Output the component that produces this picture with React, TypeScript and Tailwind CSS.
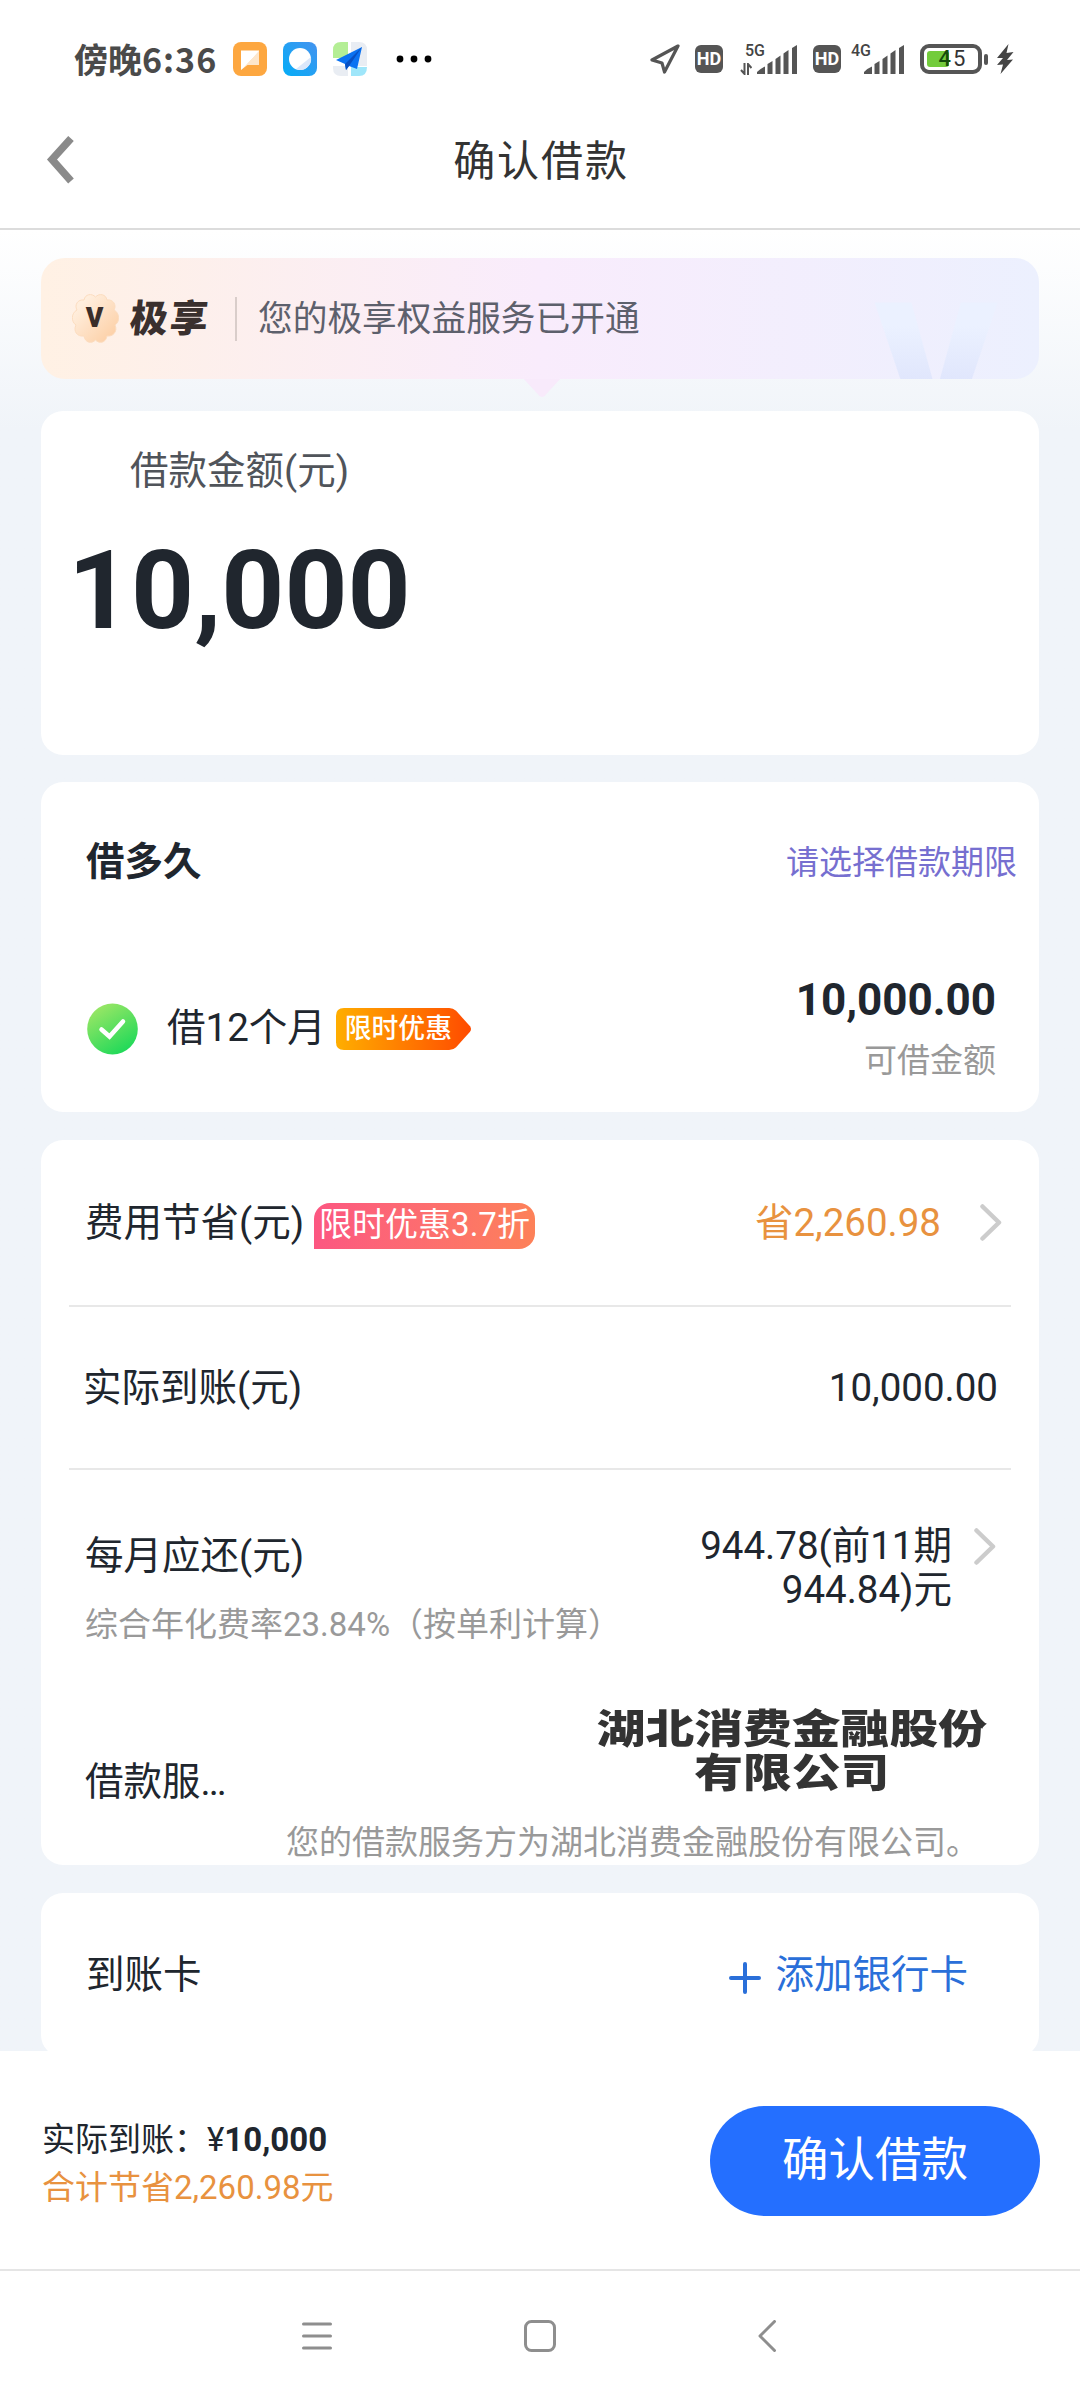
import type { ReactNode } from "react";

const SIGNAL_BARS = [
  "M0 29 L0 27 Q4 23 8 21.5 V29 Z",
  "M10.500 19 L15.500 16 V29 H10.500 Z",
  "M18.500 14 L23.500 10.500 V29 H18.500 Z",
  "M26.500 8.500 L31.500 5 V29 H26.500 Z",
  "M35 3 L40 0 V29 H35 Z",
];

function SignalBars() {
  return (
    <svg width="40" height="29" viewBox="0 0 40 29" fill="#555">
      {SIGNAL_BARS.map((d) => (
        <path key={d} d={d} />
      ))}
    </svg>
  );
}

function HdBadge() {
  return (
    <div className="flex h-7 w-7 items-center justify-center rounded-[6px] bg-[#555] font-[Roboto,sans-serif] text-[18px] font-bold leading-none text-white">
      HD
    </div>
  );
}

function AppIcons() {
  return (
    <div className="ml-4 flex items-center gap-4">
      <svg width="34" height="34" viewBox="0 0 34 34">
        <defs>
          <linearGradient id="msg" x1="0" y1="0" x2="1" y2="1">
            <stop offset="0.500" stopColor="#fff" />
            <stop offset="0.520" stopColor="#fde6cb" />
          </linearGradient>
        </defs>
        <rect width="34" height="34" rx="8" fill="#fda740" />
        <path d="M8 8.500 H26 V23 H14.500 L8 28 Z" fill="url(#msg)" />
      </svg>
      <svg width="34" height="34" viewBox="0 0 34 34">
        <defs>
          <linearGradient id="browser" x1="1" y1="0" x2="0" y2="1">
            <stop offset="0" stopColor="#4593ef" />
            <stop offset="1" stopColor="#04adf7" />
          </linearGradient>
        </defs>
        <rect width="34" height="34" rx="8" fill="url(#browser)" />
        <circle cx="17" cy="17" r="11" fill="#fff" />
        <path d="M28 15 A11 11 0 0 1 13 27 Z" fill="#dbe7fa" />
      </svg>
      <svg width="34" height="34" viewBox="0 0 34 34">
        <path d="M8 0 H15 V16 H0 V8 Q0 0 8 0 Z" fill="#b4ee95" />
        <path d="M18 0 H26 Q34 0 34 8 V24 H18 Z" fill="#e9edf3" />
        <path d="M0 24 H15 V34 H8 Q0 34 0 26 Z" fill="#e9edf3" />
        <path d="M18 25 H34 Q34 34 26 34 H18 Z" fill="#9fe6fa" />
        <path d="M29 5 L3 18 L12 22 L13 28 L16 24 L24 27 Z" fill="#0a72f2" />
        <path d="M29 5 L12 22 L13 28 L16 24 Z" fill="#0750c4" />
      </svg>
    </div>
  );
}

function StatusBar() {
  return (
    <div className="flex h-[118px] items-center pl-[74px] pr-[66px]">
      <span className="w-[143px] whitespace-nowrap text-[34px] font-bold leading-none text-[#4a4a4a] font-['Noto_Sans_CJK_SC',sans-serif]">
        傍晚<span className="tracking-[1px]">6:36</span>
      </span>
      <AppIcons />
      <svg className="ml-[29px]" width="36" height="8" viewBox="0 0 36 8">
        <circle cx="4" cy="4" r="3.400" />
        <circle cx="18" cy="4" r="3.400" />
        <circle cx="32" cy="4" r="3.400" />
      </svg>

      <div className="ml-auto flex items-center">
        <svg width="30" height="30" viewBox="0 0 30 30" fill="none" stroke="#555" strokeWidth="3.200" strokeLinejoin="round">
          <path d="M28 2 L2 16 L12 19 L14.500 28 Z" />
        </svg>
        <div className="ml-[15px]">
          <HdBadge />
        </div>
        <div className="relative ml-[34px] flex">
          <SignalBars />
          <span className="absolute -left-3 -top-[2px] text-[16px] font-medium leading-none text-[#444] font-[Roboto,sans-serif]">
            5G
          </span>
          <svg className="absolute -left-[17px] top-[18px]" width="12" height="12" viewBox="0 0 12 12" stroke="#555" strokeWidth="2" fill="none">
            <path d="M1 7 L4.500 11 V0 M8 12 V1 L11.500 5" />
          </svg>
        </div>
        <div className="ml-4">
          <HdBadge />
        </div>
        <div className="relative ml-[23px] flex">
          <SignalBars />
          <span className="absolute -left-[13px] -top-[2px] text-[16px] font-medium leading-none text-[#444] font-[Roboto,sans-serif]">
            4G
          </span>
        </div>
        <div className="relative ml-4 flex h-[30px] w-[62px] items-center justify-center rounded-[9px] border-4 border-[#555]">
          <div className="absolute left-[3px] top-[3px] h-4 w-[22px] rounded-[3px] bg-[#73cc3c]" />
          <span className="relative pl-1 text-[22px] leading-none tracking-[2px] text-[#333] font-[Roboto,sans-serif]">
            <span className="font-medium text-[#144d0c]">4</span>5
          </span>
        </div>
        <div className="ml-[2px] h-[11px] w-1 rounded-sm bg-[#555]" />
        <svg className="ml-2" width="18" height="30" viewBox="0 0 18 30" fill="#444">
          <path d="M12.500 0 L1 14 H7 L1 21 L7 20.500 L4.500 30 L17 15.500 L11 16 L17.500 8 L10.500 9 Z" />
        </svg>
      </div>
    </div>
  );
}

function TitleBar() {
  return (
    <div className="flex h-[112px] items-center border-b-2 border-[#dcdcdc] pb-[22px]">
      <svg className="mb-[5px] ml-[46px]" width="28" height="48" viewBox="0 0 28 48" fill="none" stroke="#8a8a8a" strokeWidth="7.500">
        <path d="M25 2.500 L6 23.500 L25 45" />
      </svg>
      <h1 className="flex-1 pr-[72px] text-center text-[42px] leading-[50px] tracking-[1.900px] text-[#333]">确认借款</h1>
    </div>
  );
}

function ServiceBanner() {
  return (
    <div className="relative h-[121px] shrink-0">
      <svg className="absolute left-[482px] top-[120px]" width="38" height="20" viewBox="0 0 38 20">
        <path d="M0 0 H38 L21.500 18 Q19 20 16.500 18 Z" fill="#f8eafb" />
      </svg>
      <div className="relative flex h-full items-center overflow-hidden rounded-[24px] bg-linear-to-r from-[#fff1e4] via-[#f9ecfc] to-[#ecf0fe]">
        <span className="absolute left-[832px] top-[-28px] bg-linear-to-b from-[#ebf1ff] from-40% to-[#dfe5fc] to-65% bg-clip-text text-[250px] font-bold leading-[240px] text-transparent">
          v
        </span>
        <svg className="ml-[31px]" width="47" height="49" viewBox="0 0 47 49">
          <defs>
            <linearGradient id="flower" x1="0" y1="0" x2="1" y2="1">
              <stop offset="0.200" stopColor="#ffeedd" />
              <stop offset="1" stopColor="#fccb9e" />
            </linearGradient>
          </defs>
          <path
            d="M23.500 3 C27 -1 34 0 35 6 C41 5 45 11 42 16 C48 19 48 28 43 31 C46 37 41 43 35 42 C34 49 27 50 23.500 46 C20 50 13 49 12 42 C5 43 1 37 4 31 C-1 28 -1 19 5 16 C2 11 6 5 12 6 C13 0 20 -1 23.500 3 Z"
            fill="url(#flower)"
            stroke="#fbdcbf"
            strokeWidth="1"
          />
          <text x="22.500" y="33" textAnchor="middle" fontFamily="Roboto, sans-serif" fontSize="36" fontWeight="700" fill="#3a2e2a">
            v
          </text>
        </svg>
        <span className="ml-[11px] -skew-x-6 text-[38px] font-black leading-[50px] tracking-[2px] text-[#3a302e]">极享</span>
        <div className="ml-[25px] h-11 w-[2px] bg-[#d9cdca]" />
        <p className="ml-[21px] text-[34.700px] leading-[50px] text-[#5d606c]">您的极享权益服务已开通</p>
      </div>
    </div>
  );
}

function Chevron() {
  return (
    <svg width="22" height="37" viewBox="0 0 22 37" fill="none" stroke="#ccc" strokeWidth="4.500" strokeLinecap="round" strokeLinejoin="round">
      <path d="M2.500 2.500 L19 18.500 L2.500 34.500" />
    </svg>
  );
}

function Card({ className, children }: { className: string; children: ReactNode }) {
  return <section className={`shrink-0 rounded-[22px] bg-white ${className}`}>{children}</section>;
}

function TermCard() {
  return (
    <Card className="mt-[27px] h-[330px]">
      <div className="flex h-[156px] items-center justify-between pl-[45px] pr-[22px]">
        <h2 className="pt-[3px] text-[38.500px] font-bold text-[#20262e]">借多久</h2>
        <span className="pt-[5px] text-[33px] text-[#766fd0]">请选择借款期限</span>
      </div>
      <div className="flex items-start pl-[45px] pr-[43px]">
        <div className="flex h-[182px] items-center">
          <svg width="52" height="52" viewBox="0 0 52 52">
            <defs>
              <linearGradient id="check" x1="0.200" y1="0" x2="0.800" y2="1">
                <stop offset="0" stopColor="#a0e766" />
                <stop offset="1" stopColor="#17d858" />
              </linearGradient>
            </defs>
            <ellipse cx="26.500" cy="26" rx="25.300" ry="25.500" fill="url(#check)" />
            <path d="M15.500 26.500 L23.500 33.500 L37 18.500" fill="none" stroke="#fff" strokeWidth="4.500" strokeLinecap="round" />
          </svg>
          <span className="ml-[29px] pb-[3px] text-[38.500px] text-[#20262e]">借12个月</span>
          <div className="relative ml-2.5 h-[43px] w-[136px]">
            <svg className="absolute inset-0" width="136" height="42" viewBox="0 0 137 44" preserveAspectRatio="none">
              <defs>
                <linearGradient id="promo" x1="0" y1="0" x2="1" y2="0">
                  <stop offset="0" stopColor="#ffae00" />
                  <stop offset="1" stopColor="#ff4b00" />
                </linearGradient>
              </defs>
              <path d="M8 0 H114 Q118 0 121 3 L135 19 Q137 22 135 25 L121 41 Q118 44 114 44 H8 Q0 44 0 36 V8 Q0 0 8 0 Z" fill="url(#promo)" />
            </svg>
            <span className="relative block pl-[9px] text-[26.800px] font-medium leading-[43px] text-white">限时优惠</span>
          </div>
        </div>
        <div className="ml-auto flex flex-col items-end pt-[37px]">
          <span className="text-[44px] font-bold leading-[50px] text-[#20262e]">10,000.00</span>
          <span className="mt-[11px] text-[33px] leading-[50px] text-[#999]">可借金额</span>
        </div>
      </div>
    </Card>
  );
}

function FeeCard() {
  return (
    <Card className="mt-7 flex h-[725px] flex-col px-7 text-[38.500px] text-[#20262e]">
      <div className="flex h-[167px] shrink-0 items-center border-b-2 border-[#e8e8e8] pl-4 pr-[9px]">
        <span>费用节省(元)</span>
        <span className="ml-2.5 mt-1.5 h-[46px] rounded-[16px] rounded-bl-none bg-linear-to-r from-[#fc5681] to-[#fd8158] px-[5px] text-[33px] leading-[44px] text-white">
          限时优惠3.7折
        </span>
        <span className="ml-auto mr-[39px] text-[#e8923f]">省2,260.98</span>
        <Chevron />
      </div>
      <div className="flex h-[163px] shrink-0 items-center justify-between border-b-2 border-[#e8e8e8] pl-[14px] pr-[13px]">
        <span>实际到账(元)</span>
        <span>10,000.00</span>
      </div>
      <div className="flex justify-between pl-4 pr-[15px]">
        <div className="pt-[60px]">
          <p className="leading-[52px]">每月应还(元)</p>
          <p className="mt-[19px] text-[33px] leading-[48px] text-[#999]">综合年化费率23.84%（按单利计算）</p>
        </div>
        <div className="flex pt-[54px]">
          <p className="mr-[22px] text-right leading-[44px]">
            944.78(前11期
            <br />
            944.84)元
          </p>
          <div className="pt-1">
            <Chevron />
          </div>
        </div>
      </div>
      <div className="mt-[59px] flex items-end justify-between pl-4 pr-6">
        <span className="leading-[49px]">
          借款服<span className="tracking-[-2px]">...</span>
        </span>
        <p className="mb-[10px] origin-right scale-x-[1.220] text-center text-[40px] font-black leading-[44px] text-[#333]">
          湖北消费金融股份
          <br />
          有限公司
        </p>
      </div>
      <p className="mt-[14px] pl-[217px] text-[33px] leading-[46px] text-[#999]">您的借款服务方为湖北消费金融股份有限公司。</p>
    </Card>
  );
}

function Footer() {
  return (
    <div className="flex h-[220px] items-center justify-between border-b-2 border-[#e5e5e5] bg-white pl-[42px] pr-10">
      <div className="pt-[7px] text-[33px] leading-[48px] text-[#20262e]">
        <p>
          实际到账：¥<span className="font-bold">10,000</span>
        </p>
        <p className="text-[#e8923f]">合计节省2,260.98元</p>
      </div>
      <button type="button" className="mt-[2px] h-[110px] w-[330px] rounded-full bg-[#246fff] pb-px text-[46.500px] text-white">
        确认借款
      </button>
    </div>
  );
}

function SystemNav() {
  return (
    <div className="flex flex-1 items-center bg-white pl-[301px]">
      <svg width="32" height="32" viewBox="0 0 32 32" stroke="#8e8e8e" strokeWidth="3" strokeLinecap="round">
        <path d="M2.500 4 H29.500 M2.500 16 H29.500 M2.500 28 H29.500" />
      </svg>
      <svg className="ml-[191px]" width="32" height="32" viewBox="0 0 32 32" fill="none" stroke="#8e8e8e" strokeWidth="3">
        <rect x="1.500" y="1.500" width="29" height="29" rx="6" />
      </svg>
      <svg className="ml-[201px]" width="20" height="32" viewBox="0 0 20 32" fill="none" stroke="#8e8e8e" strokeWidth="3" strokeLinecap="round" strokeLinejoin="round">
        <path d="M17.500 1.500 L3 16 L17.500 30.500" />
      </svg>
    </div>
  );
}

export default function App() {
  return (
    <div className="flex h-[2400px] w-[1080px] flex-col overflow-hidden bg-white font-[Roboto,'Noto_Sans_CJK_SC',sans-serif]">
      <StatusBar />
      <TitleBar />

      <main className="flex h-[1821px] shrink-0 flex-col overflow-hidden bg-linear-to-b from-white via-[#f0f4f9] via-[200px] to-[#f0f4f9] px-[41px] pt-7">
        <ServiceBanner />

        <Card className="mt-8 h-[344px]">
          <p className="pl-[89px] pt-[34px] text-[38.500px] leading-[52px] text-[#50545a]">借款金额(元)</p>
          <p className="pl-[27px] pt-[29px] text-[110px] font-bold leading-[130px] text-[#20262e]">10,000</p>
        </Card>

        <TermCard />
        <FeeCard />

        <Card className="mt-7 flex h-[164px] items-center justify-between pl-[45px] pr-[71px] text-[38.500px]">
          <span className="text-[#20262e]">到账卡</span>
          <span className="flex items-center text-[#2a6fd9]">
            <svg className="mr-[14px] mt-1.5" width="32" height="32" viewBox="0 0 32 32" stroke="#2a6fd9" strokeWidth="4" strokeLinecap="round">
              <path d="M2 16 H30 M16 2 V30" />
            </svg>
            添加银行卡
          </span>
        </Card>
      </main>

      <Footer />
      <SystemNav />
    </div>
  );
}
